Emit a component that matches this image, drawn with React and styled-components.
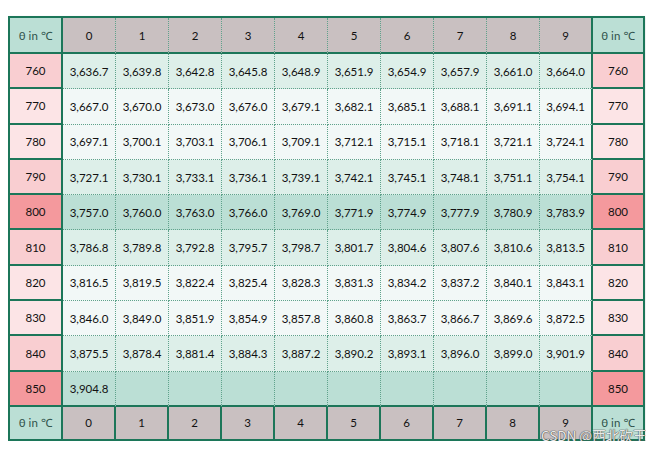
import { Fragment } from "react";
import styled, { createGlobalStyle } from "styled-components";

const GREEN = "#1c7659";
const DASH = "#5fa28b";

const mint = { dark: "#bbdfd5", mid: "#ddefe9", light: "#f2f8f7" };
const pink = { dark: "#f4999d", mid: "#f9ced1", light: "#fce4e6" };

const rows = [
    { t: 760, tone: "mid", v: ["3,636.7", "3,639.8", "3,642.8", "3,645.8", "3,648.9", "3,651.9", "3,654.9", "3,657.9", "3,661.0", "3,664.0"] },
    { t: 770, tone: "light", v: ["3,667.0", "3,670.0", "3,673.0", "3,676.0", "3,679.1", "3,682.1", "3,685.1", "3,688.1", "3,691.1", "3,694.1"] },
    { t: 780, tone: "light", v: ["3,697.1", "3,700.1", "3,703.1", "3,706.1", "3,709.1", "3,712.1", "3,715.1", "3,718.1", "3,721.1", "3,724.1"] },
    { t: 790, tone: "mid", v: ["3,727.1", "3,730.1", "3,733.1", "3,736.1", "3,739.1", "3,742.1", "3,745.1", "3,748.1", "3,751.1", "3,754.1"] },
    { t: 800, tone: "dark", v: ["3,757.0", "3,760.0", "3,763.0", "3,766.0", "3,769.0", "3,771.9", "3,774.9", "3,777.9", "3,780.9", "3,783.9"] },
    { t: 810, tone: "mid", v: ["3,786.8", "3,789.8", "3,792.8", "3,795.7", "3,798.7", "3,801.7", "3,804.6", "3,807.6", "3,810.6", "3,813.5"] },
    { t: 820, tone: "light", v: ["3,816.5", "3,819.5", "3,822.4", "3,825.4", "3,828.3", "3,831.3", "3,834.2", "3,837.2", "3,840.1", "3,843.1"] },
    { t: 830, tone: "light", v: ["3,846.0", "3,849.0", "3,851.9", "3,854.9", "3,857.8", "3,860.8", "3,863.7", "3,866.7", "3,869.6", "3,872.5"] },
    { t: 840, tone: "mid", v: ["3,875.5", "3,878.4", "3,881.4", "3,884.3", "3,887.2", "3,890.2", "3,893.1", "3,896.0", "3,899.0", "3,901.9"] },
    { t: 850, tone: "dark", v: ["3,904.8", "", "", "", "", "", "", "", "", ""] },
];

const digits = [0, 1, 2, 3, 4, 5, 6, 7, 8, 9];

const GlobalStyle = createGlobalStyle`
    body {
        margin: 8px;
        background: #ffffff;
        font-family: Lato, "Noto Sans", sans-serif;
        overflow: hidden;
    }
`;

const Page = styled.div`
    position: relative;
    padding-top: 8px;
`;

const Grid = styled.div`
    display: grid;
    grid-template-columns: 53px repeat(10, 1fr) 50px;
    grid-template-rows: 36px repeat(10, 35.3px) 32px;
    width: 637px;
    box-sizing: border-box;
    border: 2px solid ${GREEN};
    box-shadow: 0 1px 2px rgba(0, 0, 0, 0.18);
`;

const Cell = styled.div`
    display: flex;
    align-items: center;
    justify-content: center;
    box-sizing: border-box;
    font-size: 11.5px;
    color: #111111;
`;

const Corner = styled(Cell)`
    background: ${mint.dark};
    color: #2f524b;
    border-right: ${(p) => (p.$last ? "none" : `2px solid ${GREEN}`)};
    border-bottom: ${(p) => (p.$bottom ? "none" : `2px solid ${GREEN}`)};
`;

const Head = styled(Cell)`
    background: #c9c0c1;
    border-bottom: ${(p) => (p.$bottom ? "none" : `2px solid ${GREEN}`)};
    border-right: ${(p) =>
        p.$end || p.$bottom ? `2px solid ${GREEN}` : `1px dotted ${DASH}`};
`;

const Label = styled(Cell)`
    background: ${(p) => pink[p.$tone]};
    border-right: ${(p) => (p.$right ? "none" : `2px solid ${GREEN}`)};
    border-bottom: 2px solid ${GREEN};
`;

const Value = styled(Cell)`
    background: ${(p) => mint[p.$tone]};
    border-right: ${(p) => (p.$end ? `2px solid ${GREEN}` : `1px dotted ${DASH}`)};
    border-bottom: ${(p) => (p.$lastRow ? `2px solid ${GREEN}` : `1px dotted ${DASH}`)};
`;

const Watermark = styled.div`
    position: absolute;
    left: 533px;
    top: 418px;
    font-family: "Noto Sans CJK SC", "Noto Sans", sans-serif;
    font-size: 13.5px;
    line-height: 18px;
    color: rgba(255, 255, 255, 0.9);
    text-shadow: 0 0 1px #555555, 0 0 1px #555555, 0 0 1px #555555;
    white-space: nowrap;
`;

export default function App() {
    return (
        <>
            <GlobalStyle />
            <Page>
                <Grid>
                    <Corner>θ in ℃</Corner>
                    {digits.map((d) => (
                        <Head key={"h" + d} $end={d === 9}>
                            {d}
                        </Head>
                    ))}
                    <Corner $last>θ in ℃</Corner>

                    {rows.map((r, i) => (
                        <Fragment key={r.t}>
                            <Label $tone={r.tone}>{r.t}</Label>
                            {r.v.map((v, j) => (
                                <Value
                                    key={j}
                                    $tone={r.tone}
                                    $end={j === 9}
                                    $lastRow={i === rows.length - 1}
                                >
                                    {v}
                                </Value>
                            ))}
                            <Label $tone={r.tone} $right>
                                {r.t}
                            </Label>
                        </Fragment>
                    ))}

                    <Corner $bottom>θ in ℃</Corner>
                    {digits.map((d) => (
                        <Head key={"f" + d} $bottom $end={d === 9}>
                            {d}
                        </Head>
                    ))}
                    <Corner $bottom $last>
                        θ in ℃
                    </Corner>
                </Grid>
                <Watermark>CSDN @西北砍王</Watermark>
            </Page>
        </>
    );
}
